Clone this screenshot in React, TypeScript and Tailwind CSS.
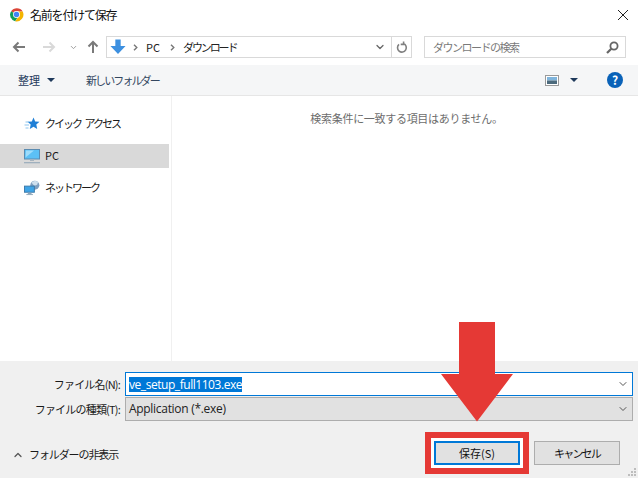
import { ChevronDown, ChevronUp } from "lucide-react";

const font = { fontFamily: '"Noto Sans CJK JP", "Open Sans", sans-serif' };

function ChromeLogo() {
  return (
    <svg width="15" height="15" viewBox="0 0 16 16">
      <path d="M8 8 L2.2 4.6 A7.3 7.3 0 0 1 14.6 4.8 L8 4.8 Z" fill="#db4437" />
      <path d="M8 8 L2.2 4.4 A7.3 7.3 0 0 0 6.6 15.2 L9.8 10 Z" fill="#0f9d58" />
      <path d="M8 4.8 L14.6 4.8 A7.3 7.3 0 0 1 6.6 15.2 L10.6 9.6 Z" fill="#f4b400" />
      <circle cx="8" cy="8" r="3.7" fill="#fff" />
      <circle cx="8" cy="8" r="2.9" fill="#4285f4" />
    </svg>
  );
}

function NavArrow({ dir, color }: { dir: "left" | "right" | "up"; color: string }) {
  const d = {
    left: "M14 8H3M7.5 3.5L3 8l4.5 4.5",
    right: "M2 8h11M8.5 3.5L13 8l-4.5 4.5",
    up: "M8 14V3M3.5 7.5L8 3l4.5 4.5",
  }[dir];
  return (
    <svg width="16" height="16" viewBox="0 0 16 16" fill="none" stroke={color} strokeWidth="2">
      <path d={d} />
    </svg>
  );
}

function Crumb() {
  return (
    <svg width="5" height="7" viewBox="0 0 5 7" fill="none" stroke="#777" strokeWidth="1.4">
      <path d="M1 .8L3.8 3.5 1 6.2" />
    </svg>
  );
}

function QuickStar() {
  return (
    <svg width="16" height="14" viewBox="0 0 16 14">
      <path d="M9.5 .5l1.7 3.9 4.3.4-3.2 2.8.9 4.3-3.7-2.2-3.7 2.2.9-4.3L3.5 4.8l4.3-.4z" fill="#1f7fd6" />
      <path d="M1.5 5h3.5M.5 8h4.5M1.5 11h3" stroke="#8cc4ee" strokeWidth="1" />
    </svg>
  );
}

function Monitor() {
  return (
    <svg width="16" height="15" viewBox="0 0 16 15">
      <rect x=".5" y=".5" width="15" height="9.5" fill="#5cc0f5" stroke="#5b8bb0" />
      <path d="M1.5 8.5L10 1.5H2z" fill="#9fdcfa" />
      <rect x="6" y="10.5" width="4" height="1.5" fill="#a7b4bf" />
      <rect x="0" y="13" width="16" height="1.3" fill="#9fb0be" />
    </svg>
  );
}

function NetworkIcon() {
  return (
    <svg width="17" height="16" viewBox="0 0 17 16">
      <circle cx="11.5" cy="5" r="4.8" fill="#7f9fc0" />
      <path d="M8 2.5a5 5 0 0 1 7-1l-1 3-3 1z" fill="#cfe0ee" />
      <rect x=".5" y="6" width="10.5" height="6.5" fill="#3fa4e6" stroke="#3a78a8" />
      <rect x="4" y="13" width="4" height="1.5" fill="#8ea6ba" />
      <rect x="2.5" y="14.5" width="7" height="1" fill="#8ea6ba" />
    </svg>
  );
}

function SideItem({ icon, label, active, narrow }: { icon: React.ReactNode; label: string; active?: boolean; narrow?: boolean }) {
  return (
    <div className={`flex h-6 w-[169px] items-center gap-[5px] pl-6 text-[11px] text-[#1a1a1a] ${active ? "bg-[#d9d9d9]" : ""}`}>
      <span className="flex w-4 justify-center">{icon}</span>
      <span className={`-mt-px ${narrow ? "tracking-[-2px] [word-spacing:3px]" : ""}`}>{label}</span>
    </div>
  );
}

export default function App() {
  return (
    <div className="relative flex h-[478px] w-[638px] flex-col overflow-hidden bg-white" style={font}>
      {/* Title bar */}
      <div className="flex h-[29px] items-center justify-between pl-[9px] pr-[10px]">
        <div className="flex items-center gap-[6px] text-[12px] tracking-[-1.2px] text-[#111]">
          <ChromeLogo />
          <span>名前を付けて保存</span>
        </div>
        <svg width="10" height="10" viewBox="0 0 10 10" stroke="#222" strokeWidth="1">
          <path d="M0 0l10 10M10 0L0 10" />
        </svg>
      </div>

      {/* Navigation row */}
      <div className="flex h-[36px] items-center pl-[11px]">
        <NavArrow dir="left" color="#7a7a7a" />
        <span className="ml-[14px]"><NavArrow dir="right" color="#d9d9d9" /></span>
        <ChevronDown size={9} strokeWidth={2.5} className="ml-[12px] text-[#9a9a9a]" />
        <span className="ml-[7px]"><NavArrow dir="up" color="#7a7a7a" /></span>
        <div className="ml-[5px] flex h-[22px] w-[306px] items-center border border-[#d9d9d9] pl-[3px] text-[11px] text-[#222]">
          <svg width="16" height="16" viewBox="0 0 18 17">
            <path d="M6 0h6v7.5h5.5L9 16.5.5 7.5H6z" fill="#3d90e0" />
          </svg>
          <span className="ml-[7px]"><Crumb /></span>
          <span className="ml-[8px]">PC</span>
          <span className="ml-[10px]"><Crumb /></span>
          <span className="ml-[8px] tracking-[-2.1px]">ダウンロード</span>
          <div className="ml-auto flex h-full items-center">
            <ChevronDown size={12} strokeWidth={2.5} className="mr-[5px] text-[#666]" />
            <div className="flex h-full w-[20px] items-center justify-center border-l border-[#d9d9d9]">
              <svg width="12" height="13" viewBox="0 0 12 13" fill="none" stroke="#808080" strokeWidth="1.6">
                <path d="M7.5 2.6A4.4 4.4 0 1 1 3 3.4M7.6.4v3H4.7" />
              </svg>
            </div>
          </div>
        </div>
        <div className="ml-[12px] flex h-[22px] w-[202px] items-center justify-between border border-[#d9d9d9] pl-2 pr-[6px] text-[11px] text-[#7a7a7a]">
          <span className="tracking-[-1.5px]">ダウンロードの検索</span>
          <svg width="13" height="13" viewBox="0 0 13 13" fill="none" stroke="#666" strokeWidth="1.8">
            <circle cx="8" cy="5" r="3.6" />
            <path d="M5.3 7.7L1 12" strokeWidth="2.2" />
          </svg>
        </div>
      </div>

      {/* Command bar */}
      <div className="flex h-[31px] items-center border-b border-[#e6e6e6] bg-[#f5f6f7] pl-[18px] pr-[15px] text-[11px] text-[#1e395b]">
        <span>整理</span>
        <span className="ml-[7px] h-0 w-0 border-x-[4px] border-t-[4px] border-x-transparent border-t-[#1e395b]" />
        <span className="ml-[31px] tracking-[-1.9px] text-[#33475f]">新しいフォルダー</span>
        <svg className="ml-auto" width="14" height="11" viewBox="0 0 14 11">
          <rect x=".5" y=".5" width="13" height="10" fill="#fff" stroke="#9a9a9a" />
          <rect x="2" y="2" width="10" height="3.5" fill="#7fb4dc" />
          <rect x="2" y="5.5" width="10" height="3.5" fill="#4c6a7c" />
        </svg>
        <span className="ml-[11px] h-0 w-0 border-x-[4px] border-t-[4px] border-x-transparent border-t-[#1e395b]" />
        <span className="ml-[29px] flex h-4 w-4 items-center justify-center rounded-full bg-[#0a62b8] text-[12px] font-bold leading-none text-white">
          ?
        </span>
      </div>

      {/* Main pane */}
      <div className="flex flex-1">
        <div className="w-[172px] border-r border-[#f0f0f0] pt-4">
          <SideItem icon={<QuickStar />} label="クイック アクセス" narrow />
          <div className="h-2" />
          <SideItem icon={<Monitor />} label="PC" active />
          <div className="h-2" />
          <SideItem icon={<NetworkIcon />} label="ネットワーク" narrow />
        </div>
        <div className="flex-1 pl-[3px] pt-[14px] text-center text-[11px] tracking-[-0.3px] text-[#6d6d6d]">
          検索条件に一致する項目はありません。
        </div>
      </div>

      {/* Bottom panel */}
      <div className="relative flex h-[117px] flex-col bg-[#f0f0f0] pt-[11px]">
        <div className="flex h-[24px] items-center">
          <span className="w-[120px] text-right text-[11px] tracking-[-0.8px] text-[#1a1a1a]">ファイル名(N):</span>
          <div className="ml-[5px] flex h-[24px] w-[508px] items-center justify-between border border-[#0078d7] bg-white pl-[3px] pr-[3px]">
            <span className="bg-[#0078d7] text-[12px] leading-[15px] tracking-[-0.45px] text-white" style={{ fontFamily: '"Open Sans", sans-serif' }}>
              ve_setup_full1103.exe
            </span>
            <ChevronDown size={12} className="text-[#555]" />
          </div>
        </div>
        <div className="mt-[1px] flex h-[24px] items-center">
          <span className="w-[120px] text-right text-[11px] tracking-[-0.8px] text-[#1a1a1a]">ファイルの種類(T):</span>
          <div className="ml-[5px] flex h-[24px] w-[508px] items-center justify-between border border-[#adadad] bg-[#e1e1e1] pl-[3px] pr-[3px] text-[12px] tracking-[-0.3px] text-[#222]" style={{ fontFamily: '"Open Sans", sans-serif' }}>
            <span>Application (*.exe)</span>
            <ChevronDown size={12} className="text-[#555]" />
          </div>
        </div>
        <div className="mt-[20px] flex items-center pl-[12px] pr-[18px]">
          <ChevronUp size={12} strokeWidth={2.5} className="mt-[3px] text-[#555]" />
          <span className="ml-[5px] mt-[3px] text-[11px] tracking-[-1.1px] text-[#1a1a1a]">フォルダーの非表示</span>
          <button className="ml-auto h-[24px] w-[86px] border-2 border-[#0078d7] bg-[#e1e1e1] text-[11px] text-[#111]">
            保存(S)
          </button>
          <button className="ml-[14px] h-[24px] w-[86px] border border-[#adadad] bg-[#e1e1e1] text-[11px] tracking-[-1.8px] text-[#111]">
            キャンセル
          </button>
        </div>
        {/* Resize grip */}
        <svg className="absolute bottom-[1px] right-[1px]" width="10" height="10" viewBox="0 0 10 10" fill="#bdbdbd">
          <rect x="7" y="1" width="2" height="2" />
          <rect x="4" y="4" width="2" height="2" />
          <rect x="7" y="4" width="2" height="2" />
          <rect x="1" y="7" width="2" height="2" />
          <rect x="4" y="7" width="2" height="2" />
          <rect x="7" y="7" width="2" height="2" />
        </svg>
      </div>

      {/* Annotation overlay */}
      <div className="absolute left-[425px] top-[432px] h-[42px] w-[104px] border-[6px] border-[#e53935] shadow-[inset_0_0_0_3px_#fff]" />
      <svg className="absolute left-[441px] top-[322px]" width="72" height="100" viewBox="0 0 72 100">
        <path d="M18 0h36v52h18L36 99.5 0 52h18z" fill="#e53935" />
      </svg>
    </div>
  );
}
